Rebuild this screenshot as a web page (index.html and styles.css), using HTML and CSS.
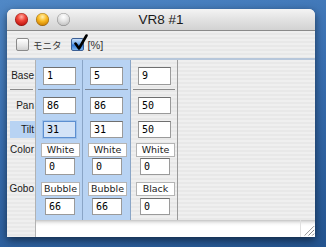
FILE: index.html
```html
<!DOCTYPE html>
<html>
<head>
<meta charset="utf-8">
<link rel="stylesheet" href="styles.css">
</head>
<body>
<div class="window">
  <div class="titlebar">
    <div class="lights">
      <span class="light red"></span>
      <span class="light yellow"></span>
      <span class="light gray"></span>
    </div>
    <div class="title">VR8 #1</div>
    <div></div>
  </div>
  <div class="toolbar">
    <label class="check"><span class="box"></span><span class="cjk">モニタ</span></label>
    <label class="check"><span class="box on"><svg class="tick" viewBox="0 0 15 17"><path d="M2.5 9.5 L6 14.5 L13.5 1.5" fill="none" stroke="#000" stroke-width="2.6" stroke-linecap="round" stroke-linejoin="round"/></svg></span><span>[%]</span></label>
  </div>
  <div class="table">
    <div class="labels">
      <div class="lbl h18 mt7">Base</div>
      <div class="sep lsep"></div>
      <div class="lbl h17 mt7">Pan</div>
      <div class="lbl h17 mt7 hl">Tilt</div>
      <div class="lbl h14 mt5">Color</div>
      <div class="lbl h14 mt24">Gobo</div>
    </div>
    <div class="main">
      <div class="cols">
        <div class="col sel c1">
          <div class="inp h18 mt7">1</div>
          <div class="sep"></div>
          <div class="inp h17 mt7">86</div>
          <div class="inp h17 mt7 focus">31</div>
          <div class="btn mt5">White</div>
          <div class="val h17 mt1">0</div>
          <div class="btn mt7">Bubble</div>
          <div class="val h17 mt2">66</div>
        </div>
        <div class="col sel c2">
          <div class="inp h18 mt7">5</div>
          <div class="sep"></div>
          <div class="inp h17 mt7">86</div>
          <div class="inp h17 mt7">31</div>
          <div class="btn mt5">White</div>
          <div class="val h17 mt1">0</div>
          <div class="btn mt7">Bubble</div>
          <div class="val h17 mt2">66</div>
        </div>
        <div class="col c3">
          <div class="inp h18 mt7">9</div>
          <div class="sep"></div>
          <div class="inp h17 mt7">50</div>
          <div class="inp h17 mt7">50</div>
          <div class="btn mt5">White</div>
          <div class="val h17 mt1">0</div>
          <div class="btn mt7">Black</div>
          <div class="val h17 mt2">0</div>
        </div>
        <div class="filler"></div>
      </div>
      <div class="hbar">
        <div class="grip">
          <svg viewBox="0 0 15 16" width="15" height="16"><path d="M4 15 L14 5 M8 15 L14 9 M12 15 L14 13" stroke="#777" stroke-width="1" fill="none"/><path d="M5 15 L14 6 M9 15 L14 10" stroke="#fff" stroke-width="1" fill="none"/></svg>
        </div>
      </div>
    </div>
  </div>
</div>
</body>
</html>
```

FILE: styles.css
```css
* { box-sizing: border-box; }
html, body { margin: 0; padding: 0; }
body {
  width: 326px;
  height: 247px;
  overflow: hidden;
  padding: 9px 0 0 7px;
  background: linear-gradient(165deg, #5088c6 0%, #386eb0 45%, #24548f 100%);
  font-family: "Liberation Sans", "DejaVu Sans", sans-serif;
  color: #111;
}
.window {
  width: 308px;
  height: 228px;
  border-radius: 6px 6px 0 0;
  box-shadow: 0 3px 9px rgba(0, 0, 0, 0.55);
  display: flex;
  flex-direction: column;
  background: #ececec;
  overflow: hidden;
}
.titlebar {
  height: 22px;
  flex: none;
  display: grid;
  grid-template-columns: 1fr auto 1fr;
  align-items: center;
  background: linear-gradient(#f4f4f4, #e2e2e2 50%, #d2d2d2);
  border-bottom: 1px solid #8a8a8a;
}
.lights { display: flex; gap: 8px; padding-left: 8px; }
.light {
  width: 13px;
  height: 13px;
  border-radius: 50%;
  box-shadow: inset 0 0 0 0.5px rgba(0,0,0,0.35);
}
.red { background: radial-gradient(circle at 50% 30%, #ffb3a8 0, #f0463a 35%, #b80f0a 80%, #7d0000 100%); }
.yellow { background: radial-gradient(circle at 50% 30%, #fff0b0 0, #f9b820 40%, #c77a00 80%, #8a5200 100%); }
.gray { background: radial-gradient(circle at 50% 30%, #ffffff 0, #e4e4e4 40%, #bdbdbd 80%, #8f8f8f 100%); }
.title { font-size: 13.5px; color: #1a1a1a; }

.toolbar {
  height: 27px;
  flex: none;
  display: flex;
  align-items: center;
  padding-left: 9px;
  background: repeating-linear-gradient(#efefef 0 2px, #e8e8e8 2px 4px);
  font-size: 11px;
  color: #333;
}
.check { display: flex; align-items: center; gap: 4px; margin-right: 9px; }
.cjk { font-family: "Noto Sans CJK JP", sans-serif; font-size: 9.5px; }
.box {
  width: 13px;
  height: 13px;
  border: 1px solid #8a8a8a;
  border-radius: 2px;
  background: linear-gradient(#ffffff, #e6e6e6 60%, #d0d0d0);
  position: relative;
}
.box.on {
  background: linear-gradient(#c8e0fb, #6fa8ec 45%, #2f78d8 55%, #7fb7f2);
  border-color: #3b5f95;
}
.tick { position: absolute; left: 1px; top: -5px; width: 15px; height: 17px; }

.table {
  flex: 1;
  display: flex;
  border-top: 2px solid #b7c7db;
}
.labels {
  width: 29px;
  flex: none;
  border-right: 1px solid #b2b2b2;
  background: repeating-linear-gradient(#efefef 0 2px, #e8e8e8 2px 4px);
  display: flex;
  flex-direction: column;
  font-size: 10px;
}
.lbl { text-align: right; padding-right: 1px; color: #1a1a1a; white-space: nowrap; }
.lbl.h18 { line-height: 18px; }
.lbl.h17 { line-height: 17px; }
.lbl.h14 { line-height: 14px; }
.lbl.hl { margin-left: 3px; background: #b8d3f3; }

.main { flex: 1; display: flex; flex-direction: column; min-width: 0; }
.cols { height: 160px; flex: none; display: flex; }
.col {
  flex: none;
  display: flex;
  flex-direction: column;
  align-items: flex-start;
  border-right: 1px solid #9a9a9a;
  background: repeating-linear-gradient(#efefef 0 2px, #e8e8e8 2px 4px);
}
.c1 { width: 47px; }
.c2 { width: 48px; }
.c3 { width: 47px; }
.col.sel { background: #b8d3f3; border-right-color: #8aa5c6; }
.filler {
  flex: 1;
  background: repeating-linear-gradient(#efefef 0 2px, #e8e8e8 2px 4px);
}

.h18 { height: 18px; }
.h17 { height: 17px; }
.h14 { height: 14px; }
.mt1 { margin-top: 1px; }
.mt2 { margin-top: 2px; }
.mt5 { margin-top: 5px; }
.mt7 { margin-top: 7px; }
.mt24 { margin-top: 25px; }

.sep {
  align-self: stretch;
  height: 1px;
  margin: 4px 2px 0 2px;
  background: #7b8797;
}
.col.c3 .sep { background: #8a8a8a; }
.lsep { margin: 4px 2px 0 3px; background: #8a8a8a; }

.inp, .val {
  margin-left: 7px;
  width: 33px;
  background: #fff;
  border: 1px solid #9a9a9a;
  border-top-color: #6f6f6f;
  font-family: "DejaVu Sans Mono", "Liberation Mono", monospace;
  font-size: 10px;
  line-height: 15px;
  padding-left: 3px;
  color: #000;
}
.val { margin-left: 9px; width: 30px; }
.inp.focus {
  background: #d3e3f7;
  border: 1px solid #5d8fd0;
  box-shadow: 0 0 0 1px #9ec1ea;
}
.btn {
  margin-left: 5px;
  width: 39px;
  height: 14px;
  background: #fff;
  border: 1px solid #b4b4b4;
  font-family: "DejaVu Sans", sans-serif;
  font-size: 9.5px;
  line-height: 12px;
  text-align: center;
  color: #222;
  white-space: nowrap;
  overflow: hidden;
}

.hbar {
  flex: 1;
  display: flex;
  background: linear-gradient(#c4c4c4 0, #e4e4e4 2px, #f8f8f8 4px, #ffffff 6px);
}
.grip {
  margin-left: auto;
  width: 15px;
  display: flex;
  align-items: flex-end;
  border-left: 1px solid #e0e0e0;
}
```
